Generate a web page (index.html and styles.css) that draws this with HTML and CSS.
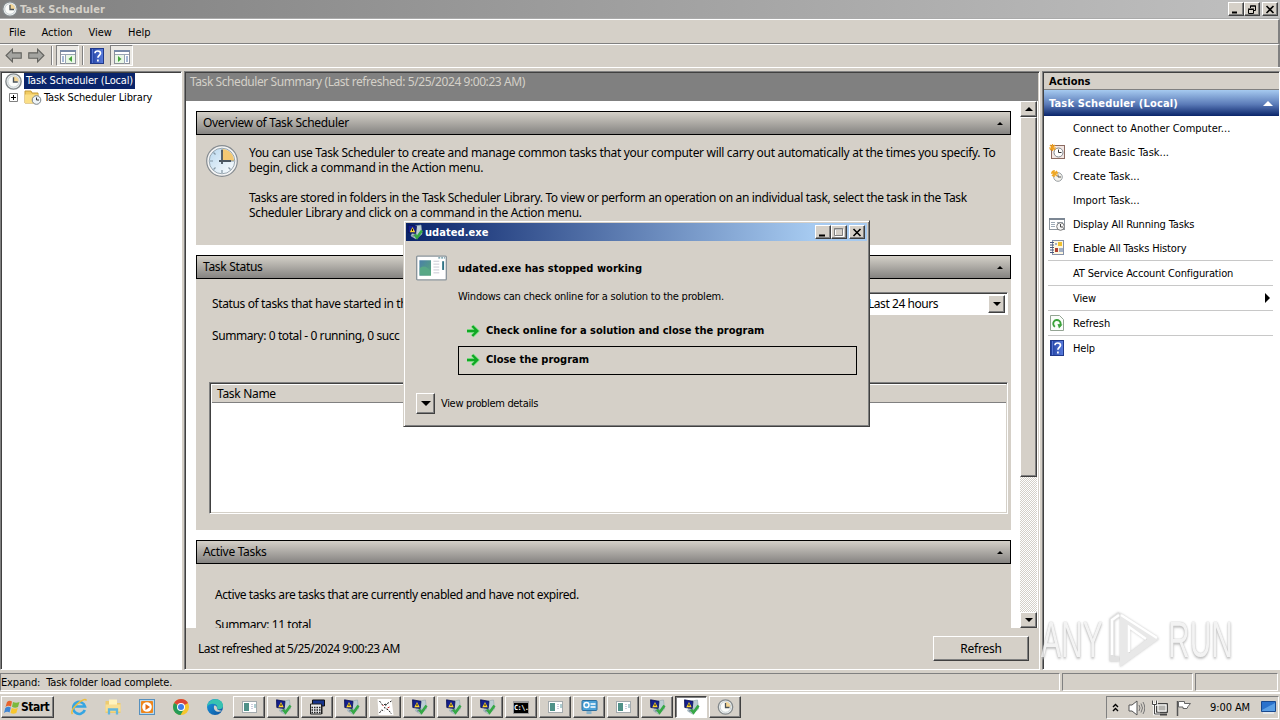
FILE: index.html
```html
<!DOCTYPE html>
<html lang="en">
<head>
<meta charset="UTF-8">
<meta name="viewport" content="width=device-width, initial-scale=1.0">
<title>Task Scheduler</title>
<link rel="stylesheet" href="styles.css">
</head>
<body>

<!-- shared icons -->
<svg class="defs" width="0" height="0">
    <defs>
        <linearGradient id="help-blue" x1="0" x2="1">
            <stop offset="0" stop-color="#1c3c9c"/><stop offset="1" stop-color="#5b7ee0"/>
        </linearGradient>
        <linearGradient id="glass" x1="0" y1="0" x2="1" y2="1">
            <stop offset="0" stop-color="#b9d8ee"/><stop offset="1" stop-color="#fdfeff"/>
        </linearGradient>
        <linearGradient id="teal" x1="0" y1="0" x2="1" y2="1">
            <stop offset="0" stop-color="#4a7fa8"/><stop offset="1" stop-color="#57a878"/>
        </linearGradient>
        <linearGradient id="edge-blue" x1="0" y1="0" x2="1" y2="1">
            <stop offset="0" stop-color="#1b9de2"/><stop offset="1" stop-color="#0c4f9c"/>
        </linearGradient>
    </defs>
    <symbol id="clock" viewBox="0 0 32 32">
        <circle cx="16" cy="16" r="15.3" fill="#f4f4f4" stroke="#858b90" stroke-width="1.2"/>
        <circle cx="16" cy="16" r="12.8" fill="url(#glass)" stroke="#9aa8b2" stroke-width="1"/>
        <path d="M16 16V4a12 12 0 0 1 12 12z" fill="#f3c873"/>
        <path d="M16 4v3M16 25v3M4 16h3M25 16h3M7.500 7.500l2 2M22.500 22.500l2 2M7.500 24.500l2-2" stroke="#8496a3" stroke-width="1.2"/>
        <path d="M16 5v14M13 16h12" stroke="#4a5661" stroke-width="1.800" fill="none"/>
    </symbol>
    <symbol id="clock-small" viewBox="0 0 16 16">
        <circle cx="8" cy="8" r="7.200" fill="#eef1f0" stroke="#83898c" stroke-width="1.300"/>
        <circle cx="8" cy="8" r="5.300" fill="#fbfcfa" stroke="#bcc6cc" stroke-width=".8"/>
        <path d="M8 8V3a5 5 0 0 1 5 5z" fill="#f5d694"/>
        <path d="M8 4v4.500h4" stroke="#4b5358" stroke-width="1.300" fill="none"/>
    </symbol>
    <symbol id="help" viewBox="0 0 14 16">
        <rect x=".5" y=".5" width="13" height="15" fill="url(#help-blue)" stroke="#20398a"/>
        <path d="M2.500 1v14" stroke="#5674d0"/>
        <path d="M5 5.200C5 2.400 10.500 2.200 10.500 5.200c0 2-2.600 2.300-2.600 4.600M7.900 11.400v2" stroke="#fff" stroke-width="1.700" fill="none"/>
    </symbol>
    <symbol id="arrow" viewBox="0 0 16 14">
        <path d="M1 7l6-6v3.500h8.300v5H7V13z" fill="#a4a4a0" stroke="#62625e"/>
    </symbol>
    <symbol id="console" viewBox="0 0 16 14">
        <rect x=".5" y=".5" width="15" height="13" fill="#fff" stroke="#8c9098"/>
        <path d="M0 1h16" stroke="#7789a6" stroke-width="2"/>
        <path d="M1 4.500h14M5.500 5v9" stroke="#9aa5b5"/>
        <path d="M2 7h2M2 9h2M2 11h2" stroke="#4d74ad"/>
        <rect x="6" y="5" width="9" height="8" fill="#e9f7e6"/>
        <path d="M12 6v6L8.500 9z" fill="#45a33c"/>
    </symbol>
    <symbol id="folder" viewBox="0 0 18 16">
        <path d="M1 2h6l1 2h6v10H1z" fill="#f2cc62" stroke="#c69b36"/>
        <path d="M1 5.500h13V14H1z" fill="#fbdf86"/>
        <circle cx="12.500" cy="11" r="4.300" fill="#eef4f8" stroke="#79828a"/>
        <path d="M12.500 8.500V11H15" stroke="#333" fill="none"/>
    </symbol>
    <symbol id="basic" viewBox="0 0 16 16">
        <rect x="2.500" y="1.500" width="13" height="13" fill="#f3e7e3" stroke="#8b6b62"/>
        <circle cx="9.500" cy="8.500" r="4.500" fill="#fff" stroke="#80878e"/>
        <path d="M9.500 5.500v3h3" stroke="#333" fill="none"/>
        <path d="M0 4h7M3.500 0v7M1 1l5 5M6 1L1 6" stroke="#f0a01e" stroke-width="1.200"/>
    </symbol>
    <symbol id="newtask" viewBox="0 0 16 16">
        <circle cx="9" cy="9" r="4.300" fill="#f4f2ec" stroke="#9aa0a4"/>
        <path d="M9 6.500V9h3" stroke="#555" fill="none"/>
        <path d="M2 5h7M5 2v7M3 3l5 5M8 3L3 8" stroke="#efa724" stroke-width="1.500"/>
    </symbol>
    <symbol id="running" viewBox="0 0 16 16">
        <rect x=".5" y="2.500" width="15" height="11" fill="#fff" stroke="#8e969e"/>
        <path d="M0 3h16" stroke="#7c8794" stroke-width="2"/>
        <path d="M2 6.500h4M2 8.500h4M2 10.500h4M8 6.500h6" stroke="#9eaab5"/>
        <circle cx="11.500" cy="10.500" r="3.800" fill="#f6f6f6" stroke="#777"/>
        <path d="M11.500 8v3h2.500" stroke="#444" fill="none"/>
    </symbol>
    <symbol id="history" viewBox="0 0 14 16">
        <rect x="2.500" y=".5" width="11" height="14" fill="#fdf6e0" stroke="#8590a8"/>
        <path d="M0 2.500h4M0 5h4M0 7.500h4M0 10h4M0 12.500h4" stroke="#49577c"/>
        <rect x="8" y="2" width="4" height="4" fill="#f0c030"/>
        <rect x="5" y="8" width="3" height="4" fill="#b04030"/>
        <path d="M5 4h2M9 9h4M9 11h4" stroke="#4668a8"/>
    </symbol>
    <symbol id="refresh" viewBox="0 0 14 16">
        <path d="M.5.5h9l4 4v11H.5z" fill="#fafdfa" stroke="#93a493"/>
        <path d="M5 11.800a3.700 3.700 0 1 1 4.500-.5" stroke="#3aa23a" stroke-width="1.900" fill="none"/>
        <path d="M7.500 9l5 .5-3.500 4z" fill="#3aa23a"/>
    </symbol>
    <symbol id="app" viewBox="0 0 32 26">
        <rect x=".7" y=".7" width="30.600" height="24.600" rx="1" fill="#fff" stroke="#8a949b" stroke-width="1.400"/>
        <rect x="3.500" y="5" width="12" height="16" fill="url(#teal)"/>
        <path d="M4 13c4-3 8-1 11 3v4H4z" fill="#58a886"/>
        <path d="M18 6h6M18 9h6M18 12h6M18 15h6M18 18h6" stroke="#c7c7d2"/>
        <path d="M28 6v9" stroke="#2f7385" stroke-width="2"/>
        <path d="M23 2.500h7" stroke="#5d8f9c" stroke-width="1.400" stroke-dasharray="2 1"/>
    </symbol>
    <symbol id="app-small" viewBox="0 0 15 12">
        <rect x=".5" y=".5" width="14" height="11" fill="#fff" stroke="#a3aaad"/>
        <rect x="2" y="2" width="5" height="8" fill="#4f9188"/>
        <path d="M9 3.500h2M9 5.500h2M9 7.500h2" stroke="#ccd"/>
        <path d="M13 3v4" stroke="#5c9aa0"/>
    </symbol>
    <symbol id="wer" viewBox="0 0 16 16">
        <path d="M8 2l6-1 1 9-6 5-5-3z" fill="#bccdd4" stroke="#8fa6ae" stroke-width=".6"/>
        <path d="M1 .8l8.500 1.500-.8 7.200L1.300 8.500z" fill="#14208c" stroke="#0a1050" stroke-width=".8"/>
        <path d="M5 11l5-1.500v2L6 13z" fill="#8093a0"/>
        <path d="M5.500 3l2.700 5.200H2.800z" fill="#ffd72e"/>
        <path d="M5.500 4.800v2.200" stroke="#000" stroke-width=".9"/>
        <path d="M7.500 10.500l2.500 3L15 6.500" stroke="#35a845" stroke-width="2.600" fill="none"/>
    </symbol>
    <symbol id="go" viewBox="0 0 14 14">
        <path d="M1 7h9M6.300 2L11.300 7l-5 5" stroke="#9be59d" stroke-width="4" fill="none"/>
        <path d="M1 7h10M6.300 2L11.300 7l-5 5" stroke="#10a824" stroke-width="2.400" fill="none"/>
    </symbol>
    <symbol id="winflag" viewBox="0 0 16 16">
        <path d="M3 3Q5.500.8 8 2.500L7 7.500Q4 6 1.500 8z" fill="#e8642c"/>
        <path d="M9 3q3 1.500 6.500 0L14 8q-3 1.500-6-.2z" fill="#7bb93c"/>
        <path d="M1.300 9Q4 7 6.800 8.500L5.600 13.500Q3 12 0 14z" fill="#3f86d4"/>
        <path d="M7.800 9q3 1.500 6 0l-1.500 5q-3 1.500-5.800 0z" fill="#f8c62c"/>
    </symbol>
</svg>

<div class="titlebar">
    <svg class="i16"><use href="#clock-small"/></svg>
    <span class="caption">Task Scheduler</span>
    <div class="winbtns">
        <button class="wb"><svg viewBox="0 0 10 9"><path d="M1 7.500h5" stroke="#000" stroke-width="2"/></svg></button>
        <button class="wb"><svg viewBox="0 0 10 9"><path d="M3.500 3V1h5v4.500H7M3 1h6M1.500 4.500h5v4h-5zM1 4h6" stroke="#000" fill="none"/></svg></button>
        <button class="wb close"><svg viewBox="0 0 10 9"><path d="M1.500 1l7 7M8.500 1l-7 7" stroke="#000" stroke-width="1.600"/></svg></button>
    </div>
</div>

<div class="menubar"><span>File</span><span>Action</span><span>View</span><span>Help</span></div>

<div class="toolbar">
    <svg class="nav"><use href="#arrow"/></svg>
    <svg class="nav fwd"><use href="#arrow"/></svg>
    <i class="sep"></i>
    <div class="tool on"><svg><use href="#console"/></svg></div>
    <i class="sep second"></i>
    <svg class="helpbtn"><use href="#help"/></svg>
    <div class="tool on flip"><svg><use href="#console"/></svg></div>
</div>

<div class="main">
    <div class="tree">
        <div class="node"><svg class="i17"><use href="#clock-small"/></svg><span class="selected">Task Scheduler (Local)</span></div>
        <div class="node child">
            <svg class="plus" viewBox="0 0 9 9"><path d="M.5.5h8v8h-8z" fill="#fff" stroke="#808080"/><path d="M2 4.500h5M4.500 2v5" stroke="#000"/></svg>
            <svg class="folder"><use href="#folder"/></svg><span>Task Scheduler Library</span>
        </div>
    </div>

    <div class="center">
        <div class="center-head">Task Scheduler Summary (Last refreshed: 5/25/2024 9:00:23 AM)</div>
        <div class="scroller">
            <div class="sections">
                <div class="section overview">
                    <div class="bar">Overview of Task Scheduler<i></i></div>
                    <div class="body">
                        <svg class="i32"><use href="#clock"/></svg>
                        <div class="text">
                            <p>You can use Task Scheduler to create and manage common tasks that your computer will carry out automatically at the times you specify. To<br><span class="l2">begin, click a command in the Action menu.</span></p>
                            <p><span class="l3">Tasks are stored in folders in the Task Scheduler Library. To view or perform an operation on an individual task, select the task in the Task</span><br>Scheduler Library and click on a command in the Action menu.</p>
                        </div>
                    </div>
                </div>
                <div class="section status">
                    <div class="bar">Task Status<i></i></div>
                    <div class="body">
                        <div class="period">
                            <span>Status of tasks that have started in th</span>
                            <div class="select"><span>Last 24 hours</span><button class="drop"><i class="down"></i></button></div>
                        </div>
                        <div class="sum">Summary: 0 total - 0 running, 0 succ</div>
                        <div class="list"><div class="list-head">Task Name</div></div>
                    </div>
                </div>
                <div class="section active">
                    <div class="bar">Active Tasks<i></i></div>
                    <div class="body">
                        <div>Active tasks are tasks that are currently enabled and have not expired.</div>
                        <div class="total">Summary: 11 total</div>
                    </div>
                </div>
            </div>
            <div class="scrollbar">
                <button class="sb"><i class="up"></i></button>
                <div class="thumb"></div>
                <div class="track"></div>
                <button class="sb"><i class="down"></i></button>
            </div>
        </div>
        <div class="center-foot"><span>Last refreshed at 5/25/2024 9:00:23 AM</span><button class="refresh">Refresh</button></div>
    </div>

    <div class="actions">
        <div class="actions-head">Actions</div>
        <div class="actions-title">Task Scheduler (Local)<i></i></div>
        <ul>
            <li><span class="wide">Connect to Another Computer...</span></li>
            <li><svg><use href="#basic"/></svg><span class="wide">Create Basic Task...</span></li>
            <li><svg><use href="#newtask"/></svg><span class="wide">Create Task...</span></li>
            <li><span class="wide">Import Task...</span></li>
            <li><svg><use href="#running"/></svg><span>Display All Running Tasks</span></li>
            <li><svg><use href="#history"/></svg><span>Enable All Tasks History</span></li>
            <li class="line"><span>AT Service Account Configuration</span></li>
            <li class="line"><span>View</span><i></i></li>
            <li class="line"><svg><use href="#refresh"/></svg><span class="wide">Refresh</span></li>
            <li class="line"><svg><use href="#help"/></svg><span>Help</span></li>
        </ul>
    </div>
</div>

<div class="statusbar">
    <div class="cell msg">Expand:&nbsp; Task folder load complete.</div>
    <div class="cell"></div>
    <div class="cell"></div>
</div>

<div class="taskbar">
    <button class="start"><svg class="i16"><use href="#winflag"/></svg>Start</button>
    <div class="quick">
        <svg viewBox="0 0 18 18"><path d="M14.800 12A6 6 0 1 1 15 8.500H5" stroke="#35a5e2" stroke-width="2.600" fill="none"/><path d="M2.500 16C-1 12 14-2 16.500 2.500" stroke="#eebd38" stroke-width="1.500" fill="none"/></svg>
        <svg viewBox="0 0 18 18"><path d="M1.500 3h6l1 2h8v10h-15z" fill="#edcb70"/><path d="M5 1.500h8V8H5z" fill="#fff3bd"/><path d="M1.500 6.500h15v7h-15z" fill="#f8df94"/><path d="M5 16.500v-5h8v5" stroke="#62b6dc" stroke-width="2.300" fill="none"/></svg>
        <svg viewBox="0 0 18 18"><rect x="1.500" y="1.500" width="15" height="15" fill="#b9d8ed" stroke="#5690be"/><rect x="3" y="3" width="12" height="12" rx="1" fill="#ee861c"/><circle cx="9" cy="9" r="4.800" fill="#fff"/><path d="M7.500 6l4.500 3-4.500 3z" fill="#e36a12"/></svg>
        <svg viewBox="0 0 18 18"><circle cx="9" cy="9" r="8" fill="#f6c62d"/><path d="M9 9L2.100 5A8 8 0 0 1 16 5z" fill="#dc4537"/><path d="M9 9L2.100 5A8 8 0 0 0 8.500 17l3.500-6z" fill="#259b57"/><circle cx="9" cy="9" r="4" fill="#fff"/><circle cx="9" cy="9" r="3" fill="#3f7ee8"/></svg>
        <svg viewBox="0 0 18 18"><circle cx="9" cy="9" r="8" fill="url(#edge-blue)"/><path d="M1 9C2-1 17-1 17 8c0 4-6 4-6 2 2-5-8-6-10-1z" fill="#37c2b1"/><path d="M8 8c-1 5 4 7 8 5-1-1-5 0-5-3 0-2-2-3-3-2z" fill="#d4d0c8"/></svg>
    </div>
    <div class="tasks">
        <button class="task"><svg class="win"><use href="#app-small"/></svg></button>
        <button class="task"><svg><use href="#wer"/></svg></button>
        <button class="task"><svg viewBox="0 0 16 16"><path d="M3 1h12v6H3z" fill="#16348c" stroke="#111"/><path d="M1 5h11v10H1z" fill="#e8e8e8" stroke="#222"/><path d="M2 8.500h9M2 11h9M2 13.500h9" stroke="#222" stroke-width="1.400" stroke-dasharray="1.500 1"/><path d="M12.500 7v8" stroke="#222"/></svg></button>
        <button class="task"><svg><use href="#wer"/></svg></button>
        <button class="task"><svg viewBox="0 0 16 16"><path d="M0 0h14l2 16H1z" fill="#fff"/><path d="M2 2l3 4 4-1 5-3M9 5l-2 4 4 2 3 4M2 14l2-3 3 1" stroke="#222" stroke-dasharray="2 1.300" fill="none"/><path d="M5 6l1 1M10 9l2-1" stroke="#c22"/></svg></button>
        <button class="task"><svg><use href="#wer"/></svg></button>
        <button class="task"><svg><use href="#wer"/></svg></button>
        <button class="task"><svg><use href="#wer"/></svg></button>
        <button class="task"><span class="cmd">C:\.</span></button>
        <button class="task"><svg class="win"><use href="#app-small"/></svg></button>
        <button class="task"><svg viewBox="0 0 16 16"><rect x=".5" y="1.500" width="15" height="10" rx="1" fill="#4ba2d8" stroke="#2c6e9e"/><circle cx="5" cy="6" r="2.500" fill="none" stroke="#fff" stroke-width="1.400"/><path d="M9 5h5M9 8h5" stroke="#fff" stroke-width="1.300"/><path d="M5 12h5v3H5z" fill="#89b4cc"/></svg></button>
        <button class="task"><svg class="win"><use href="#app-small"/></svg></button>
        <button class="task"><svg><use href="#wer"/></svg></button>
        <button class="task pressed"><svg><use href="#wer"/></svg></button>
        <button class="task"><svg><use href="#clock-small"/></svg></button>
    </div>
    <div class="tray">
        <svg class="chev" viewBox="0 0 7 9"><path d="M1 4l2.500-2.500L6 4M1 8l2.500-2.500L6 8" stroke="#000" stroke-width="1.400" fill="none"/></svg>
        <svg class="vol" viewBox="0 0 17 16"><path d="M1 5h3l5-4v14l-5-4H1z" fill="#fff" stroke="#555"/><path d="M11 5q2 3 0 6M13 3.500q3 4.500 0 9M15 2q3.500 6 0 12" stroke="#777" fill="none"/></svg>
        <svg class="net" viewBox="0 0 16 16"><path d="M4.500 3.500h11v9h-11z" fill="#aaa9a5" stroke="#444"/><path d="M6 5h8v6H6z" fill="#b5b4b0" stroke="#fff"/><path d="M8 14.500h7" stroke="#444" stroke-width="2"/><path d="M.5.500v4h4v-4M2.500 5v9H8" stroke="#fff" stroke-width="2.500" fill="none"/><path d="M.5.500v4h4v-4M2.500 5v9H8" stroke="#444" fill="none"/></svg>
        <svg class="flag" viewBox="0 0 16 16"><path d="M1.500 1v15" stroke="#555" stroke-width="1.500"/><path d="M2.500 1.500h6v2h6l-2.500 3-1 2h-4v-1.500H2.500z" fill="#fff" stroke="#666"/></svg>
        <span class="time">9:00 AM</span>
        <svg class="desk" viewBox="0 0 15 13"><path d="M.5.500h14v10H.5z" fill="#2b72cc" stroke="#19498e"/><path d="M1 9L14 2v8H1z" fill="#5b9fe4"/><path d="M2 12h11" stroke="#e9eff4" stroke-width="1.500"/></svg>
    </div>
</div>

<div class="dialog">
    <div class="dlg-title">
        <svg class="i16"><use href="#wer"/></svg><span>udated.exe</span>
        <div class="winbtns">
            <button class="wb"><svg viewBox="0 0 10 9"><path d="M1 7.500h6" stroke="#000" stroke-width="2"/></svg></button>
            <button class="wb"><svg viewBox="0 0 10 9"><path d="M1.500 1.500h8v7h-8z" stroke="#fff" fill="none"/><path d="M.5.500h8v7h-8zM0 1h9" stroke="#808080" fill="none"/></svg></button>
            <button class="wb close"><svg viewBox="0 0 10 9"><path d="M1.500 1l7 7M8.500 1l-7 7" stroke="#000" stroke-width="1.600"/></svg></button>
        </div>
    </div>
    <div class="dlg-head"><svg><use href="#app"/></svg><b>udated.exe has stopped working</b></div>
    <p class="dlg-text">Windows can check online for a solution to the problem.</p>
    <div class="choices">
        <div class="choice"><svg><use href="#go"/></svg>Check online for a solution and close the program</div>
        <div class="choice focus"><svg><use href="#go"/></svg>Close the program</div>
    </div>
    <div class="details"><button><i class="down"></i></button><span>View problem details</span></div>
</div>

<div class="watermark">
    <span>ANY</span>
    <svg viewBox="0 0 54 62"><path d="M11 50H4V11l8-6" fill="none" stroke="#dcdcdc" stroke-width="5"/><path d="M12 4l39 26-39 28zM21 18v26l18-14z" fill="#e4e4e4" fill-rule="evenodd"/><path d="M4 46V11l7-5M13 6l36 23M21 43V18l17 12" fill="none" stroke="#fff" stroke-width="2.500"/></svg>
    <span class="run">RUN</span>
</div>

</body>
</html>
```
FILE: styles.css
```css
* {
    box-sizing: border-box;
}

body {
    margin: 0;
    width: 1280px;
    height: 720px;
    overflow: hidden;
    position: relative;
    display: flex;
    flex-direction: column;
    background: #d5d0c8;
    color: #000;
    font-family: "DejaVu Sans Condensed", "DejaVu Sans", sans-serif;
    font-size: 11px;
    font-stretch: condensed;
    line-height: 15px;
    letter-spacing: -0.15px;
    white-space: nowrap;
}

p, ul {
    margin: 0;
    padding: 0;
}

svg {
    display: block;
    flex: none;
}

.defs {
    position: absolute;
}

button {
    font: inherit;
    letter-spacing: inherit;
    padding: 0;
    border: 1px solid;
    border-color: #fff #404040 #404040 #fff;
    box-shadow: inset -1px -1px #808080;
    background: #d5d0c8;
    color: #000;
}

.i16 { width: 16px; height: 16px; }
.i17 { width: 17px; height: 17px; }
.i32 { width: 32px; height: 32px; }

.up, .down {
    display: block;
    width: 0;
    margin: auto;
    border: 4px solid transparent;
}

.up { border-top: 0; border-bottom-color: #000; }
.down { border-bottom: 0; border-top-color: #000; }

/* window caption */
.titlebar {
    height: 19px;
    display: flex;
    align-items: center;
    padding: 0 2px 0;
    border-bottom: 1px solid #aaa;
    background: linear-gradient(90deg, #808080, #c0c0c0);
    color: #d4d0c8;
    font-weight: bold;
    letter-spacing: 0.09px;
}

.caption {
    margin-left: 2px;
}

.winbtns {
    display: flex;
    margin-left: auto;
}

.wb {
    width: 16px;
    height: 14px;
    padding: 1px 2px;
}

.wb svg {
    width: 10px;
    height: 9px;
}

.wb.close {
    margin-left: 2px;
}

.menubar {
    height: 25px;
    display: flex;
    gap: 16px;
    padding: 5px 9px 0;
    border-top: 1px solid #fff;
    border-right: 2px solid #808080;
    border-bottom: 1px solid #808080;
    letter-spacing: 0;
}

.toolbar {
    height: 24px;
    display: flex;
    align-items: center;
    padding: 0 5px 1px;
    border-top: 1px solid #fff;
    border-right: 2px solid #808080;
    border-bottom: 1px solid #808080;
}

.nav { width: 17px; height: 15px; }
.fwd { margin-left: 6px; transform: scaleX(-1); }

.sep {
    width: 2px;
    height: 19px;
    margin: 0 3px 0 6px;
    border-left: 1px solid #808080;
    border-right: 1px solid #fff;
}

.sep.second {
    margin: 0 6px 0 3px;
}

.tool {
    width: 23px;
    height: 21px;
    padding: 4px 3px;
    border: 1px solid;
    border-color: #808080 #fff #fff #808080;
    background: #ebe9e4;
}

.tool svg { width: 16px; height: 14px; }
.flip svg { transform: scaleX(-1); }
.helpbtn { width: 14px; height: 16px; margin-right: 6px; }

.main {
    height: 604px;
    display: flex;
    padding: 3px 0 1px;
    margin-top: -1px;
    border-top: 1px solid #fff;
}

/* left tree */
.tree {
    width: 182px;
    background: #fff;
    border: 1px solid;
    border-color: #808080 #fff #fff #808080;
    box-shadow: inset 1px 1px #404040;
    padding: 1px 0 0 4px;
}

.node {
    height: 16px;
    display: flex;
    align-items: center;
}

.selected {
    height: 16px;
    margin-left: 2px;
    padding: 0 2px;
    background: #0a246a;
    color: #fff;
}

.child { padding-left: 4px; }
.plus { width: 9px; height: 9px; }
.folder { width: 18px; height: 16px; margin: 0 2px 0 6px; }

/* center pane */
.center {
    width: 856px;
    margin-left: 2px;
    border: 1px solid;
    border-color: #808080 #fff #fff #808080;
    box-shadow: inset 1px 1px #404040;
    padding: 1px 1px 0 1px;
    display: flex;
    flex-direction: column;
    font-family: "Noto Sans", sans-serif;
    font-size: 12px;
    font-stretch: normal;
    letter-spacing: -0.31px;
}

.center-head {
    height: 28px;
    padding: 1px 4px;
    background: #808080;
    color: #d4d0c8;
    letter-spacing: -0.43px;
}

.scroller {
    height: 527px;
    display: flex;
    background: #fff;
    overflow: hidden;
}

.sections {
    width: 834px;
    padding: 10px 9px 0 10px;
}

.section {
    margin-bottom: 10px;
    background: #d5d0c8;
}

.overview { height: 134px; }
.status { height: 275px; }
.active { height: 120px; }

.bar {
    height: 24px;
    display: flex;
    align-items: center;
    padding: 0 7px 2px 6px;
    border: 1px solid #000;
    background: linear-gradient(#d4d0c8, #858381);
}

.bar i {
    margin: 3px 0 0 auto;
    border: 3px solid transparent;
    border-top: 0;
    border-bottom-color: #000;
}

.overview .body {
    display: flex;
    gap: 11px;
    padding: 10px;
}

.text p {
    margin-bottom: 15px;
}

.l2 { letter-spacing: -0.27px; }
.l3 { letter-spacing: -0.36px; }

.status .body {
    padding: 13px 3px 0 13px;
}

.period {
    height: 23px;
    display: flex;
    justify-content: space-between;
    align-items: center;
    padding-left: 3px;
    letter-spacing: -0.37px;
}

.select {
    width: 150px;
    height: 23px;
    display: flex;
    justify-content: space-between;
    border: 1px solid;
    border-color: #808080 #fff #fff #808080;
    box-shadow: inset 1px 1px #404040;
    background: #fff;
    padding: 2px 2px 1px 9px;
    line-height: 18px;
    letter-spacing: -0.45px;
}

.drop {
    width: 17px;
    height: 18px;
}

.sum {
    margin: 13px 0 0 3px;
    letter-spacing: -0.42px;
}

.list {
    height: 132px;
    margin-top: 39px;
    background: #fff;
    border: 1px solid;
    border-color: #808080 #fff #fff #808080;
    box-shadow: inset 1px 1px #404040, inset -1px -1px #d4d0c8;
    padding: 2px 1px 1px 2px;
}

.list-head {
    height: 18px;
    padding: 1px 5px;
    background: #d5d0c8;
    border-bottom: 1px solid #808080;
}

.active .body {
    padding: 23px 19px;
    letter-spacing: -0.43px;
}

.total {
    margin-top: 15px;
}

.scrollbar {
    width: 17px;
    display: flex;
    flex-direction: column;
}

.sb {
    height: 16px;
    flex: none;
}

.thumb {
    height: 360px;
    border: 1px solid;
    border-color: #fff #404040 #404040 #fff;
    box-shadow: inset -1px -1px #808080;
    background: #d5d0c8;
}

.track {
    flex: 1;
    background: repeating-conic-gradient(#fff 0 25%, #d4d0c8 0 50%) 0 0 / 2px 2px;
}

.center-foot {
    flex: 1;
    display: flex;
    align-items: center;
    justify-content: space-between;
    padding: 0 9px 0 12px;
    letter-spacing: -0.49px;
}

.refresh {
    width: 96px;
    height: 25px;
    letter-spacing: -0.25px;
}

/* actions pane */
.actions {
    width: 238px;
    margin-left: 2px;
    background: #fff;
    border: 1px solid;
    border-color: #808080 #fff #fff #808080;
    box-shadow: inset 1px 1px #404040;
    padding: 1px 0 0 1px;
}

.actions-head {
    height: 17px;
    padding: 1px 5px;
    background: #d5d0c8;
    border-bottom: 1px solid #808080;
    font-weight: bold;
    letter-spacing: 0;
}

.actions-title {
    height: 26px;
    display: flex;
    align-items: center;
    padding: 0 6px 0 5px;
    background: linear-gradient(#a6caf0, #5b7bb8 55%, #0a246a);
    color: #fff;
    font-weight: bold;
    letter-spacing: 0.17px;
}

.actions-title i {
    margin-left: auto;
    border: 5px solid transparent;
    border-top: 0;
    border-bottom-color: #fff;
}

.actions ul {
    list-style: none;
    padding: 0 6px 0 4px;
}

.actions li {
    height: 24px;
    display: grid;
    grid-template-columns: 25px 1fr auto;
    align-items: center;
}

.actions li span { grid-column: 2; }
.actions li svg { width: 16px; height: 16px; grid-row: 1; margin-left: 1px; }
.actions li i { margin-right: 3px; border: 5px solid transparent; border-right: 0; border-left-color: #000; }
.actions .wide { letter-spacing: 0; }

.actions .line {
    height: 25px;
    border-top: 1px solid #c8c8c8;
}

.statusbar {
    height: 22px;
    display: flex;
    gap: 2px;
    padding: 2px 0 1px;
    border-bottom: 1px solid #fff;
}

.cell {
    width: 131px;
    border: 1px solid;
    border-color: #808080 #fff #fff #808080;
}

.cell:last-child { width: 83px; }
.cell.msg { width: 1060px; padding-top: 1px; }

/* taskbar */
.taskbar {
    height: 27px;
    display: flex;
    border-top: 1px solid #fff;
    padding-top: 2px;
}

.start {
    width: 53px;
    height: 22px;
    display: flex;
    align-items: center;
    gap: 1px;
    margin-left: 1px;
    padding-left: 2px;
    font-weight: bold;
    font-size: 12px;
    letter-spacing: -0.5px;
}

.quick {
    display: flex;
    gap: 16px;
    padding: 2px 0 0 16px;
}

.quick svg {
    width: 18px;
    height: 18px;
}

.tasks {
    display: flex;
    gap: 2px;
    margin-left: 9px;
}

.task {
    width: 32px;
    height: 22px;
    display: flex;
    align-items: center;
    justify-content: center;
}

.task svg { width: 17px; height: 16px; }
.task .win { width: 15px; height: 12px; }

.pressed {
    background: #fff;
    border-color: #404040 #fff #fff #404040;
    box-shadow: inset 1px 1px #808080;
}

.cmd {
    width: 16px;
    height: 13px;
    border: 1px solid #999;
    border-top-width: 2px;
    background: #000;
    color: #fff;
    font: bold 7px/10px "DejaVu Sans Mono", monospace;
    letter-spacing: -0.6px;
}

.tray {
    width: 173px;
    height: 23px;
    display: flex;
    align-items: center;
    margin: 0 1px 0 auto;
    padding: 0 2px 0 5px;
    border: 1px solid;
    border-color: #808080 #fff #fff #808080;
}

.chev { width: 7px; height: 9px; margin-right: 9px; }
.vol { width: 17px; height: 16px; margin-right: 7px; }
.net { width: 16px; height: 16px; margin-right: 8px; }
.flag { width: 16px; height: 16px; }
.time { margin-left: auto; letter-spacing: -0.1px; }
.desk { width: 15px; height: 13px; margin-left: 11px; }

/* crash dialog */
.dialog {
    position: absolute;
    left: 403px;
    top: 220px;
    width: 467px;
    height: 207px;
    border: 1px solid;
    border-color: #d4d0c8 #404040 #404040 #d4d0c8;
    box-shadow: inset 1px 1px #fff, inset -1px -1px #808080;
    background: #d5d0c8;
    padding: 2px;
}

.dlg-title {
    height: 18px;
    display: flex;
    align-items: center;
    padding: 0 2px 0 1px;
    background: linear-gradient(90deg, #0a246a, #a6caf0 88%);
    color: #fff;
    font-weight: bold;
    letter-spacing: 0.05px;
}

.dlg-title span {
    margin-left: 2px;
}

.dlg-head {
    display: flex;
    align-items: center;
    gap: 11px;
    margin: 14px 0 0 10px;
    letter-spacing: 0.03px;
}

.dlg-head svg {
    width: 31px;
    height: 26px;
}

.dlg-text {
    margin: 8px 0 0 52px;
    letter-spacing: -0.23px;
}

.choices {
    margin: 13px 10px 0 52px;
}

.choice {
    height: 29px;
    display: flex;
    align-items: center;
    gap: 6px;
    padding: 0 0 3px 7px;
    border: 1px solid transparent;
    font-weight: bold;
    letter-spacing: -0.01px;
}

.choice svg {
    width: 14px;
    height: 14px;
    position: relative;
    top: 1px;
}

.choice.focus {
    border-color: #000;
}

.details {
    display: flex;
    align-items: center;
    gap: 6px;
    margin: 18px 0 0 10px;
    letter-spacing: -0.33px;
}

.details button {
    width: 19px;
    height: 21px;
}

.details .down {
    border-width: 5px 5px 0;
}

/* translucent logo over the desktop */
.watermark {
    position: absolute;
    left: 1041px;
    top: 609px;
    display: flex;
    align-items: center;
    color: #f2f2f2;
    opacity: 0.85;
    font: 50px/62px "Liberation Sans", sans-serif;
    letter-spacing: 0;
    text-shadow: 0 0 2px #aaa, 0 2px 3px #bbb;
}

.watermark span {
    width: 61px;
    transform: scaleX(0.6);
    transform-origin: left;
}

.watermark svg {
    width: 54px;
    height: 62px;
    margin-left: 6px;
    filter: drop-shadow(0 0 1px #bbb);
}

.watermark .run {
    margin-left: 6px;
}
```
